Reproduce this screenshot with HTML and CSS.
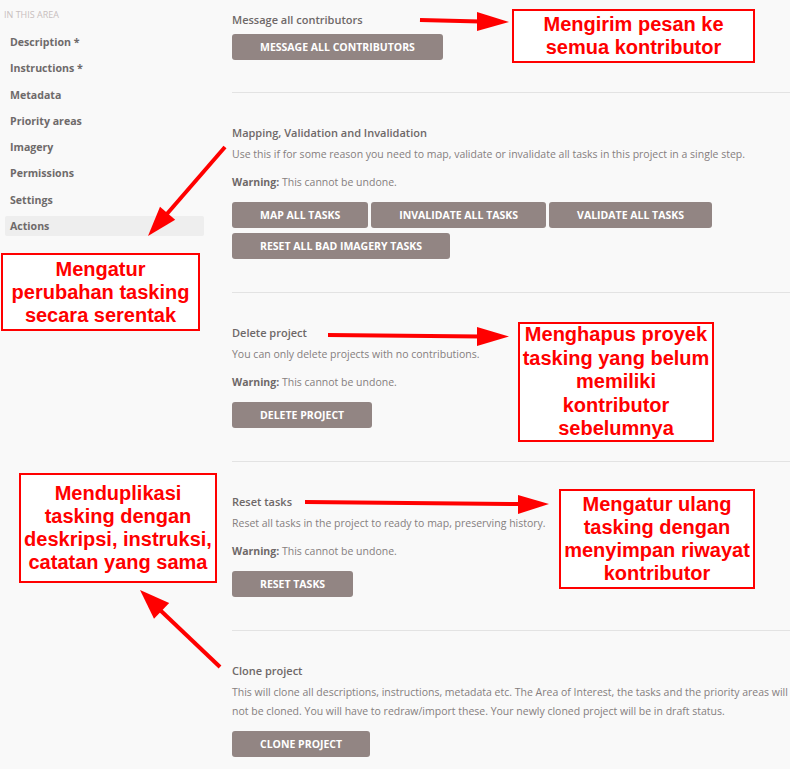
FILE: index.html
```html
<!DOCTYPE html>
<html>
<head>
<meta charset="utf-8">
<link rel="stylesheet" href="styles.css">
</head>
<body>
<div class="page">
  <aside class="sidebar">
    <div class="side-head">In this area</div>
    <nav class="side-nav">
      <div class="side-item">Description *</div>
      <div class="side-item">Instructions *</div>
      <div class="side-item">Metadata</div>
      <div class="side-item">Priority areas</div>
      <div class="side-item">Imagery</div>
      <div class="side-item">Permissions</div>
      <div class="side-item">Settings</div>
      <div class="side-item active">Actions</div>
    </nav>
  </aside>
  <main class="main">
    <section class="sec first">
      <h3 class="title tight">Message all contributors</h3>
      <div class="btns"><button class="btn">Message all contributors</button></div>
    </section>
    <section class="sec">
      <h3 class="title">Mapping, Validation and Invalidation</h3>
      <p class="desc">Use this if for some reason you need to map, validate or invalidate all tasks in this project in a single step.</p>
      <p class="warn"><b>Warning:</b> This cannot be undone.</p>
      <div class="btns">
        <button class="btn">Map all tasks</button><button class="btn">Invalidate all tasks</button><button class="btn">Validate all tasks</button><button class="btn">Reset all bad imagery tasks</button>
      </div>
    </section>
    <section class="sec">
      <h3 class="title">Delete project</h3>
      <p class="desc">You can only delete projects with no contributions.</p>
      <p class="warn"><b>Warning:</b> This cannot be undone.</p>
      <div class="btns"><button class="btn">Delete project</button></div>
    </section>
    <section class="sec">
      <h3 class="title">Reset tasks</h3>
      <p class="desc">Reset all tasks in the project to ready to map, preserving history.</p>
      <p class="warn"><b>Warning:</b> This cannot be undone.</p>
      <div class="btns"><button class="btn">Reset tasks</button></div>
    </section>
    <section class="sec last">
      <h3 class="title">Clone project</h3>
      <p class="desc">This will clone all descriptions, instructions, metadata etc. The Area of Interest, the tasks and the priority areas will not be cloned. You will have to redraw/import these. Your newly cloned project will be in draft status.</p>
      <div class="btns"><button class="btn">Clone project</button></div>
    </section>
  </main>
</div>

<svg class="arrows" width="790" height="769" viewBox="0 0 790 769">
  <g stroke="#ff0000" stroke-width="4" fill="none">
    <line x1="420" y1="20" x2="480" y2="21.5"/>
    <line x1="225" y1="147" x2="166" y2="215"/>
    <line x1="328" y1="335" x2="480" y2="336.5"/>
    <line x1="305" y1="502" x2="521" y2="504"/>
    <line x1="220" y1="667" x2="159" y2="609"/>
  </g>
  <g fill="#ff0000">
    <polygon points="477,12 509,22 477,31"/>
    <polygon points="148,236 160,206.8 175.2,219.8"/>
    <polygon points="477,327 509,336.5 477,346"/>
    <polygon points="518,495 549,504 518,514"/>
    <polygon points="140,590 169.2,602.9 154,618.7"/>
  </g>
</svg>

<div class="note n1">Mengirim pesan ke<br>semua kontributor</div>
<div class="note n2">Mengatur<br>perubahan tasking<br>secara serentak</div>
<div class="note n3">Menghapus proyek<br>tasking yang belum<br>memiliki<br>kontributor<br>sebelumnya</div>
<div class="note n4">Menduplikasi<br>tasking dengan<br>deskripsi, instruksi,<br>catatan yang sama</div>
<div class="note n5">Mengatur ulang<br>tasking dengan<br>menyimpan riwayat<br>kontributor</div>
</body>
</html>
```

FILE: styles.css
```css
html, body {
  margin: 0;
  padding: 0;
  background: #f9f9f9;
}
body {
  position: relative;
  width: 790px;
  height: 769px;
  overflow: hidden;
  font-family: "Open Sans", "DejaVu Sans", sans-serif;
  color: #7a7373;
}
.page {
  display: flex;
  gap: 28px;
}
.sidebar {
  width: 204px;
  flex: none;
  padding-top: 9px;
}
.side-head {
  font-size: 9px;
  line-height: 12px;
  text-transform: uppercase;
  color: #c8bebe;
  padding-left: 4px;
  margin-bottom: 11px;
}
.side-nav {
  display: flex;
  flex-direction: column;
  gap: 6.3px;
}
.side-item {
  margin-left: 5px;
  padding-left: 5px;
  font-size: 10.6px;
  line-height: 20px;
  font-weight: 700;
  color: #6e6a6a;
  border-radius: 2px;
}
.side-item.active {
  background: #eeeeee;
}
.main {
  flex: 1;
}
.sec {
  padding: 31px 0 33px;
  border-bottom: 1px solid #e3e3e3;
}
.sec.first {
  padding-top: 11px;
  padding-bottom: 32px;
}
.sec.last {
  border-bottom: none;
}
.title {
  margin: 0;
  font-size: 11px;
  line-height: 18px;
  font-weight: 600;
  color: #6e6868;
}
.desc, .warn {
  margin: 3px 0 0;
  font-size: 10.5px;
  line-height: 19px;
  color: #857e7e;
}
.warn {
  margin-top: 9px;
}
.warn b {
  font-weight: 700;
  color: #6e6868;
}
.btns {
  margin-top: 10px;
  display: flex;
  flex-wrap: wrap;
  gap: 5px 3px;
}
.title.tight + .btns {
  margin-top: 5px;
}
.btn {
  height: 26px;
  padding: 0 28px;
  border: none;
  border-radius: 3px;
  background: #928583;
  color: #ffffff;
  font-family: "Open Sans", "DejaVu Sans", sans-serif;
  font-size: 10.5px;
  font-weight: 700;
  text-transform: uppercase;
  white-space: nowrap;
}
.arrows {
  position: absolute;
  left: 0;
  top: 0;
  pointer-events: none;
}
.note {
  position: absolute;
  box-sizing: border-box;
  display: flex;
  align-items: center;
  justify-content: center;
  text-align: center;
  background: #ffffff;
  border: 2px solid #ff0000;
  color: #ff0000;
  font-family: "Liberation Sans", Arial, sans-serif;
  font-weight: 700;
  font-size: 20px;
  line-height: 23px;
}
.n1 { left: 512px; top: 9px; width: 243px; height: 54px; }
.n2 { left: 1px; top: 253px; width: 199px; height: 78px; }
.n3 { left: 518px; top: 322px; width: 196px; height: 120px; line-height: 23.5px; }
.n4 { left: 19px; top: 473px; width: 198px; height: 110px; }
.n5 { left: 559px; top: 489px; width: 196px; height: 100px; }
```
